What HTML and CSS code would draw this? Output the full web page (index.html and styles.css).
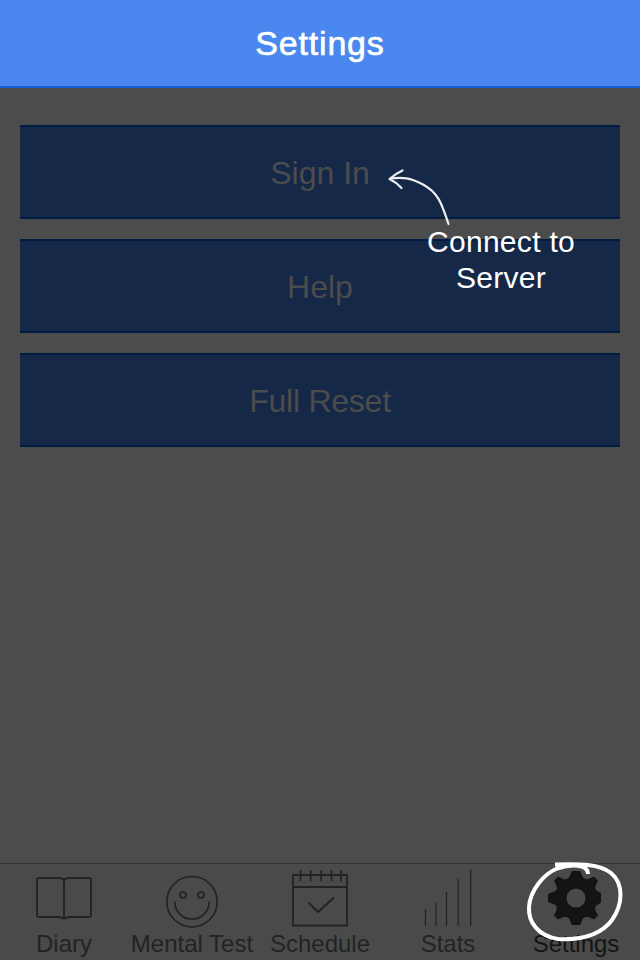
FILE: index.html
```html
<!DOCTYPE html>
<html lang="en">
<head>
<meta charset="utf-8">
<title>Settings</title>
<link rel="stylesheet" href="styles.css">
</head>
<body>
<div class="app">
  <header class="navbar"><h1>Settings</h1></header>
  <main class="content">
    <button class="action">Sign In</button>
    <button class="action">Help</button>
    <button class="action reset">Full Reset</button>
  </main>
  <nav class="tabs">
    <a class="tab">
      <svg class="icon" viewBox="0 0 128 68" fill="none" stroke="currentColor" stroke-width="1.8" stroke-linejoin="round">
        <path d="M64 18C64 15 62 14 59 14H39Q37 14 37 16V51Q37 53 39 53H60Q62 54.500 64 54.500Q66 54.500 68 53H89Q91 53 91 51V16Q91 14 89 14H69C66 14 64 15 64 18V54"/>
      </svg>
      <span>Diary</span>
    </a>
    <a class="tab">
      <svg class="icon" viewBox="0 0 128 68" fill="none" stroke="currentColor" stroke-width="1.7" stroke-linecap="round">
        <circle cx="64" cy="37.700" r="25.200"/><circle cx="55" cy="31" r="3"/><circle cx="73" cy="31" r="3"/>
        <path d="M46.800 38A17.200 17 0 0 0 81.200 38"/>
      </svg>
      <span>Mental Test</span>
    </a>
    <a class="tab">
      <svg class="icon" viewBox="0 0 128 68" fill="none" stroke="currentColor" stroke-width="1.8">
        <path d="M37 11H91V61.500H37ZM37 23H91M44.500 6V17M54.700 6V17M65.200 6V17M75.500 6V17M85 6V17"/>
        <path d="M52.500 38.500L62 48L78 33.500" stroke-width="2"/>
      </svg>
      <span>Schedule</span>
    </a>
    <a class="tab">
      <svg class="icon" viewBox="0 0 128 68" fill="none" stroke="currentColor" stroke-width="1.300">
        <path d="M41.500 45V62M62.500 28V62M86.700 5.500V62"/><path d="M52 38.500V62M74.200 15V62" stroke-width="1.5" opacity=".8"/>
      </svg>
      <span>Stats</span>
    </a>
    <a class="tab active">
      <svg class="icon" viewBox="0 0 128 68">
        <g fill="currentColor" transform="translate(64 34)">
          <path fill-rule="evenodd" d="M-4-27H4L7-20.500Q9.500-18 12.500-19L18-21.500L22-17.500L19.500-12Q18.500-9 20.500-7.500L25-5V4.500L20.500 7.500Q18.500 9 19.500 12L22 17.500L18 21.500L12.500 19Q9.500 18 7 20.500L4 27H-4L-7 20.500Q-9.500 18-12.500 19L-18 21.500L-22 17.500L-19.500 12Q-18.500 9-20.500 7L-28 4V-4L-20.500-7Q-18.500-9-19.500-12L-22-17.500L-18-21.500L-12.500-19Q-9.500-18-7-20.500ZM9.500 0A9.500 9.500 0 1 0-9.500 0A9.500 9.500 0 1 0 9.500 0Z"/>
        </g>
      </svg>
      <span>Settings</span>
    </a>
  </nav>
  <p class="hint">Connect to<br>Server</p>
  <svg class="marks" viewBox="0 0 640 960" fill="none" stroke="#fff" stroke-linecap="round" stroke-linejoin="round">
    <path stroke="#eceef2" stroke-width="2.200" d="M448.500 224C442 205 439 193 423 184.500C410 177.500 403 177 390 178.500M402.500 170.500Q395 174 389.500 179Q396 182 401.500 188"/>
    <path stroke-width="4" stroke-linecap="butt" d="M555 864.500C577 864 599 863 611 873C624 884 623 904 612 920C600 936 578 940 558 939C539 936 528 923 529 907C530 890 544 874 557 868.500C571 864 588 864 588 874"/>
  </svg>
</div>
</body>
</html>
```
FILE: styles.css
```css
* { box-sizing: border-box; }
body { margin: 0; font-family: "Liberation Sans", Arial, sans-serif; }
.app {
  position: relative;
  display: flex;
  flex-direction: column;
  width: 640px;
  height: 960px;
  overflow: hidden;
  background: #4c4c4c;
}
.navbar {
  display: flex;
  align-items: center;
  justify-content: center;
  height: 88px;
  background: #4a87ee;
  border-bottom: 2px solid #145fd7;
}
.navbar h1 {
  margin: 0;
  color: #fff;
  font-size: 34px;
  font-weight: 400;
  letter-spacing: .8px;
  -webkit-text-stroke: .6px #fff;
}
.content {
  flex: 1;
  display: flex;
  flex-direction: column;
  gap: 20px;
  padding: 37px 20px 0;
}
.action {
  height: 94px;
  padding: 2px 0 0;
  border: solid #001d43;
  border-width: 2px 0;
  background: #162848;
  color: #4c4c4c;
  font: 32px "Liberation Sans", Arial, sans-serif;
}
.reset { letter-spacing: -.25px; }
.tabs {
  display: flex;
  height: 97px;
  border-top: 1px solid #353535;
  background: #4a4a4a;
}
.tab {
  display: flex;
  flex-direction: column;
  align-items: center;
  width: 128px;
  color: #232323;
  font-size: 24px;
  line-height: 23px;
  white-space: nowrap;
}
.icon { display: block; width: 128px; height: 68px; flex: none; }
.active { color: #141414; }
.hint {
  position: absolute;
  left: 401px;
  top: 224px;
  width: 200px;
  margin: 0;
  color: #fff;
  font-size: 30px;
  line-height: 36px;
  letter-spacing: .3px;
  text-align: center;
}
.marks { position: absolute; inset: 0; width: 640px; height: 960px; pointer-events: none; }
```
